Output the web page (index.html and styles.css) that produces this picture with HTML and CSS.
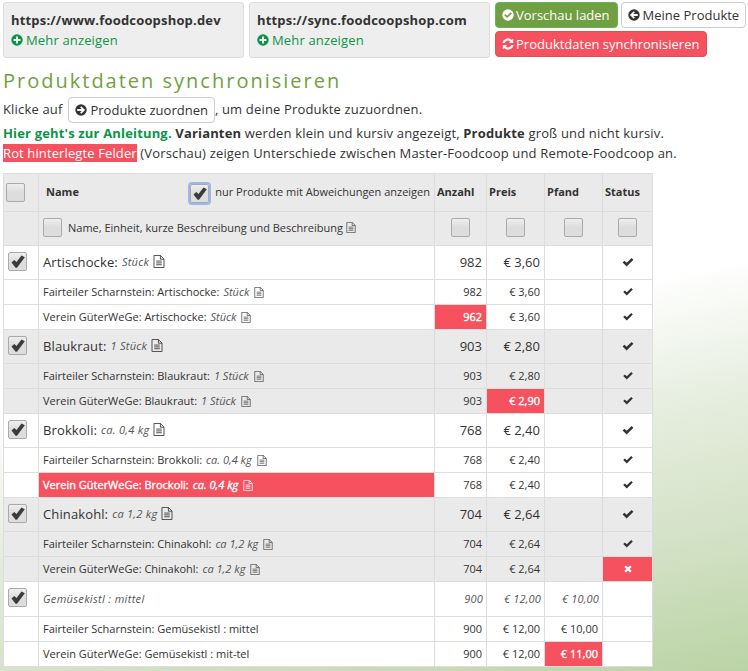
FILE: index.html
```html
<!DOCTYPE html>
<html lang="de">
<head>
<meta charset="utf-8">
<title>Produktdaten synchronisieren</title>
<link rel="stylesheet" href="styles.css">
</head>
<body>
<svg class="defs" aria-hidden="true">
  <symbol id="plus" viewBox="0 0 12 12"><path fill-rule="evenodd" d="M6 .3a5.7 5.7 0 1 0 0 11.4A5.7 5.7 0 0 0 6 .3ZM5 2.5h2V5h2.5v2H7v2.5H5V7H2.500V5H5Z"/></symbol>
  <symbol id="check-circle" viewBox="0 0 12 12"><path fill-rule="evenodd" d="M6 .3a5.700 5.700 0 1 0 0 11.400A5.700 5.700 0 0 0 6 .3ZM2.200 6.200 3.400 5 5.200 6.700 8.700 3.300 9.900 4.500 5.200 9.100Z"/></symbol>
  <symbol id="arrow-left" viewBox="0 0 12 12"><path fill-rule="evenodd" d="M6 .3a5.700 5.700 0 1 0 0 11.400A5.700 5.700 0 0 0 6 .3ZM1.900 6 5.700 2.200 6.900 3.400 5.200 5.100H9.800V6.900H5.200L6.900 8.600 5.700 9.800Z"/></symbol>
  <symbol id="arrow-right" viewBox="0 0 12 12"><path fill-rule="evenodd" d="M6 .3a5.700 5.700 0 1 0 0 11.400A5.700 5.700 0 0 0 6 .3ZM10.100 6 6.300 2.200 5.100 3.400 6.800 5.100H2.200V6.900H6.800L5.100 8.600 6.300 9.800Z"/></symbol>
  <symbol id="sync" viewBox="0 0 12 12"><path d="M.4 5A5.700 5.700 0 0 1 9.900 1.900L11.200.7V5H6.900L8.400 3.400A3.700 3.700 0 0 0 2.600 5ZM11.600 7A5.700 5.700 0 0 1 2.100 10.100L.8 11.300V7H5.100L3.600 8.600A3.700 3.700 0 0 0 9.400 7Z"/></symbol>
  <symbol id="doc" viewBox="0 0 12 14"><path fill="none" stroke="currentColor" d="M.6 .5H7.500L11.400 4.300V13.500H.6ZM7.500 .5V4.500H11.400M3 6.500H9M3 8.500H9M3 10.500H9"/></symbol>
  <symbol id="tick" viewBox="0 0 12 10"><path d="M0 5 2 3 4.500 5.300 10 0 12 2 4.500 9.500Z"/></symbol>
  <symbol id="boxtick" viewBox="0 0 14 13"><path d="M.5 7.500 3.200 5 5.500 7 10.500 .5 13.800 2.300 6 12.700H4.600Z"/></symbol>
  <symbol id="cross" viewBox="0 0 10 10"><path d="M.5 2.500 2.500.5 5 3 7.500.5 9.500 2.500 7 5 9.500 7.500 7.500 9.500 5 7 2.500 9.500.5 7.500 3 5Z"/></symbol>
</svg>
<main>
  <header class="top">
    <section class="domain"><strong>https://www.foodcoopshop.dev</strong><a><svg class="ico"><use href="#plus"/></svg><span>Mehr anzeigen</span></a></section>
    <section class="domain"><strong>https://sync.foodcoopshop.com</strong><a><svg class="ico"><use href="#plus"/></svg><span>Mehr anzeigen</span></a></section>
    <nav class="actions">
      <a class="btn green"><svg class="ico"><use href="#check-circle"/></svg><span>Vorschau laden</span></a>
      <a class="btn"><svg class="ico"><use href="#arrow-left"/></svg><span>Meine Produkte</span></a>
      <a class="btn red"><svg class="ico"><use href="#sync"/></svg><span>Produktdaten synchronisieren</span></a>
    </nav>
  </header>
  <h1>Produktdaten synchronisieren</h1>
  <p class="intro first"><span>Klicke auf</span><a class="btn"><svg class="ico"><use href="#arrow-right"/></svg><span>Produkte zuordnen</span></a><span>, um deine Produkte zuzuordnen.</span></p>
  <p class="intro"><span><b class="link">Hier geht's zur Anleitung.</b> <b>Varianten</b> werden klein und kursiv angezeigt, <b>Produkte</b> groß und nicht kursiv.</span></p>
  <p class="intro"><span><span class="mark">Rot hinterlegte Felder</span> (Vorschau) zeigen Unterschiede zwischen Master-Foodcoop und Remote-Foodcoop an.</span></p>
  <table>
    <colgroup><col class="c1"><col class="c2"><col class="c3"><col class="c4"><col class="c4"><col class="c5"></colgroup>
    <thead>
      <tr class="h1r"><th><i class="box"></i></th><th><div class="namehead"><span>Name</span><label><i class="box on focus"><svg><use href="#boxtick"/></svg></i><span>nur Produkte mit Abweichungen anzeigen</span></label></div></th><th>Anzahl</th><th>Preis</th><th>Pfand</th><th>Status</th></tr>
      <tr class="h2r"><td></td><td><label class="sub"><i class="box"></i><span>Name, Einheit, kurze Beschreibung und Beschreibung</span><svg class="doc"><use href="#doc"/></svg></label></td><td class="mid"><i class="box"></i></td><td class="mid"><i class="box"></i></td><td class="mid"><i class="box"></i></td><td class="mid"><i class="box"></i></td></tr>
    </thead>
    <tbody id="rows"></tbody>
  </table>
</main>
<script src="rows.js"></script>
</body>
</html>
```
FILE: styles.css
```css
* { box-sizing: border-box; }
html { height: 100%; }
body {
  margin: 0; height: 671px; overflow: hidden;
  font: 13px/20px "Open Sans", sans-serif; color: #333;
  background: linear-gradient(168deg, #fff 50%, #e6eedf 66%, #d4e2c7 82%, #bad3a5 100%);
}
.defs { position: absolute; width: 0; height: 0; }
svg { fill: currentColor; flex: none; }
main { padding: 2px 3px 0; }
.top { display: flex; gap: 5px; height: 56px; }
.domain {
  width: 241px; height: 56px; padding: 7px 7px;
  border: 1px solid #ddd; border-radius: 3px; background: #eee;
}
.domain strong { display: block; font-size: 13px; white-space: nowrap; letter-spacing: .18px; }
.domain a { display: flex; align-items: center; gap: 3px; color: #0c9547; letter-spacing: .15px; }
.ico { width: 12px; height: 12px; }
.actions { display: flex; flex-wrap: wrap; align-content: flex-start; gap: 3px; flex: 1; margin-right: -3px; }
.btn {
  display: flex; align-items: center; gap: 3px; height: 26px; padding: 0 6px;
  border: 1px solid #ccc; border-radius: 4px; background: #fff; white-space: nowrap;
}
.actions .btn { gap: 2px; padding-right: 7px; }
.actions .btn:nth-child(2) { gap: 3px; padding-right: 6px; margin-right: -2px; }
.btn.green { background: #719f41; border-color: #5cb85c; color: #fff; }
.btn.red { background: #f5515f; border-color: #d9534f; color: #fff; }
h1 { margin: 11px 0 0; font-size: 20px; line-height: 24px; font-weight: 400; letter-spacing: 2px; color: #719f41; }
.intro { margin: 0; height: 20px; display: flex; white-space: nowrap; letter-spacing: .165px; }
.intro.first { height: 30px; padding-top: 4px; }
.intro.first > span { padding-top: 2px; }
.intro.first .btn { margin-left: 6px; letter-spacing: 0; }
.link { color: #0c9547; }
.mark { background: #f5515f; color: #fff; letter-spacing: .12px; }
table {
  width: 650px; margin-top: 10px; table-layout: fixed; border-spacing: 0;
  border-top: 1px solid #ddd; border-left: 1px solid #ddd; background: #fff;
  font-size: 11px; line-height: 16px; white-space: nowrap;
}
.c1 { width: 35px; } .c2 { width: 396px; } .c3 { width: 52px; } .c4 { width: 58px; } .c5 { width: 50px; }
th, td { padding: 0 4px; border-right: 1px solid #ddd; border-bottom: 1px solid #ddd; text-align: left; }
th { padding: 0 2px 1px; }
thead, .grey { background: #eaeaea; }
.h1r { height: 38px; } .h2r { height: 34px; }
.h2r td, .main td { padding-bottom: 2px; }
.namehead { display: flex; align-items: center; justify-content: space-between; padding: 0 2px 0 5px; }
.namehead .box { margin: 1px 0 -1px; }
label { display: flex; align-items: center; gap: 6px; font-weight: 400; }
.sub svg { margin-left: -3px; }
.box {
  display: flex; align-items: center; justify-content: center; width: 19px; height: 19px;
  border: 1px solid #aaa; border-radius: 2px; background: linear-gradient(#eee, #ddd 50%);
}
.on svg { width: 14px; height: 13px; color: #3b3b3b; }
.focus { outline: 2px solid #9bb8ee; outline-offset: 0; }
.mid .box { margin: 0 auto; }
.doc { width: 10px; height: 11px; color: #555; }
.main { height: 34px; font-size: 13px; }
.main.small { height: 35px; font-size: 11px; font-style: italic; color: #555; }
.main.small td { padding-bottom: 0; }
.main.small .box { margin: -2px 0 2px; }
.main.small .name { letter-spacing: .34px; }
.main.small .num { letter-spacing: .15px; padding-right: 3px; }
.line { height: 25px; }
.name { display: flex; align-items: center; gap: 4px; }
.name em { font-size: 11px; color: #555; }
.line .doc { margin-left: 1px; }
.main .name { letter-spacing: .12px; }
.main .name em { letter-spacing: .27px; }
.main .doc { width: 12px; height: 13px; color: #444; }
.num { text-align: right; }
.status { text-align: center; }
.status svg { width: 10px; height: 8px; display: block; margin: 0 auto; }
.main .status svg { width: 12px; height: 9px; position: relative; top: 1px; }
.diff, .diff em, .diff .doc { background: #f5515f; color: #fff; }
.diff { -webkit-text-stroke: .35px #fff; }
```
FILE: rows.js
```js
const products = [
  ["Artischocke:", "Stück", 982, "€ 3,60", "Artischocke:", 962, "€ 3,60", "num"],
  ["Blaukraut:", "1 Stück", 903, "€ 2,80", "Blaukraut:", 903, "€ 2,90", "price"],
  ["Brokkoli:", "ca. 0,4 kg", 768, "€ 2,40", "Brockoli:", 768, "€ 2,40", "name"],
  ["Chinakohl:", "ca 1,2 kg", 704, "€ 2,64", "Chinakohl:", 704, "€ 2,64", "status"],
  ["Gemüsekistl : mittel", "", 900, "€ 12,00", "Gemüsekistl : mit-tel", 900, "€ 12,00", "deposit"]
];
const svg = (id, cls = "") => `<svg class="${cls}"><use href="#${id}"/></svg>`;
function row(kind, label, unit, amount, price, deposit, diff, small) {
  const d = key => diff === key ? " diff" : "";
  const box = kind.startsWith("main") ? `<i class="box on">${svg("boxtick")}</i>` : "";
  const name = `<div class="name"><span>${label}</span>${unit ? `<em>${unit}</em>${svg("doc", "doc")}` : ""}</div>`;
  const status = small ? "" : svg(diff === "status" ? "cross" : "tick");
  return `<tr class="${kind}"><td>${box}</td><td class="${d("name")}">${name}</td><td class="num${d("num")}">${amount}</td><td class="num${d("price")}">${price}</td><td class="num${d("deposit")}">${deposit}</td><td class="status${d("status")}">${status}</td></tr>`;
}
document.getElementById("rows").innerHTML = products.map((p, i) => {
  const grey = i % 2 ? " grey" : "";
  const small = !p[1];
  return row("main" + grey + (small ? " small" : ""), p[0], p[1], p[2], p[3], small ? "€ 10,00" : "", "", small)
    + row("line" + grey, "Fairteiler Scharnstein: " + p[0], p[1], p[2], p[3], small ? "€ 10,00" : "", "", small)
    + row("line" + grey, "Verein GüterWeGe: " + p[4], p[1], p[5], p[6], small ? "€ 11,00" : "", p[7], small);
}).join("");
```
